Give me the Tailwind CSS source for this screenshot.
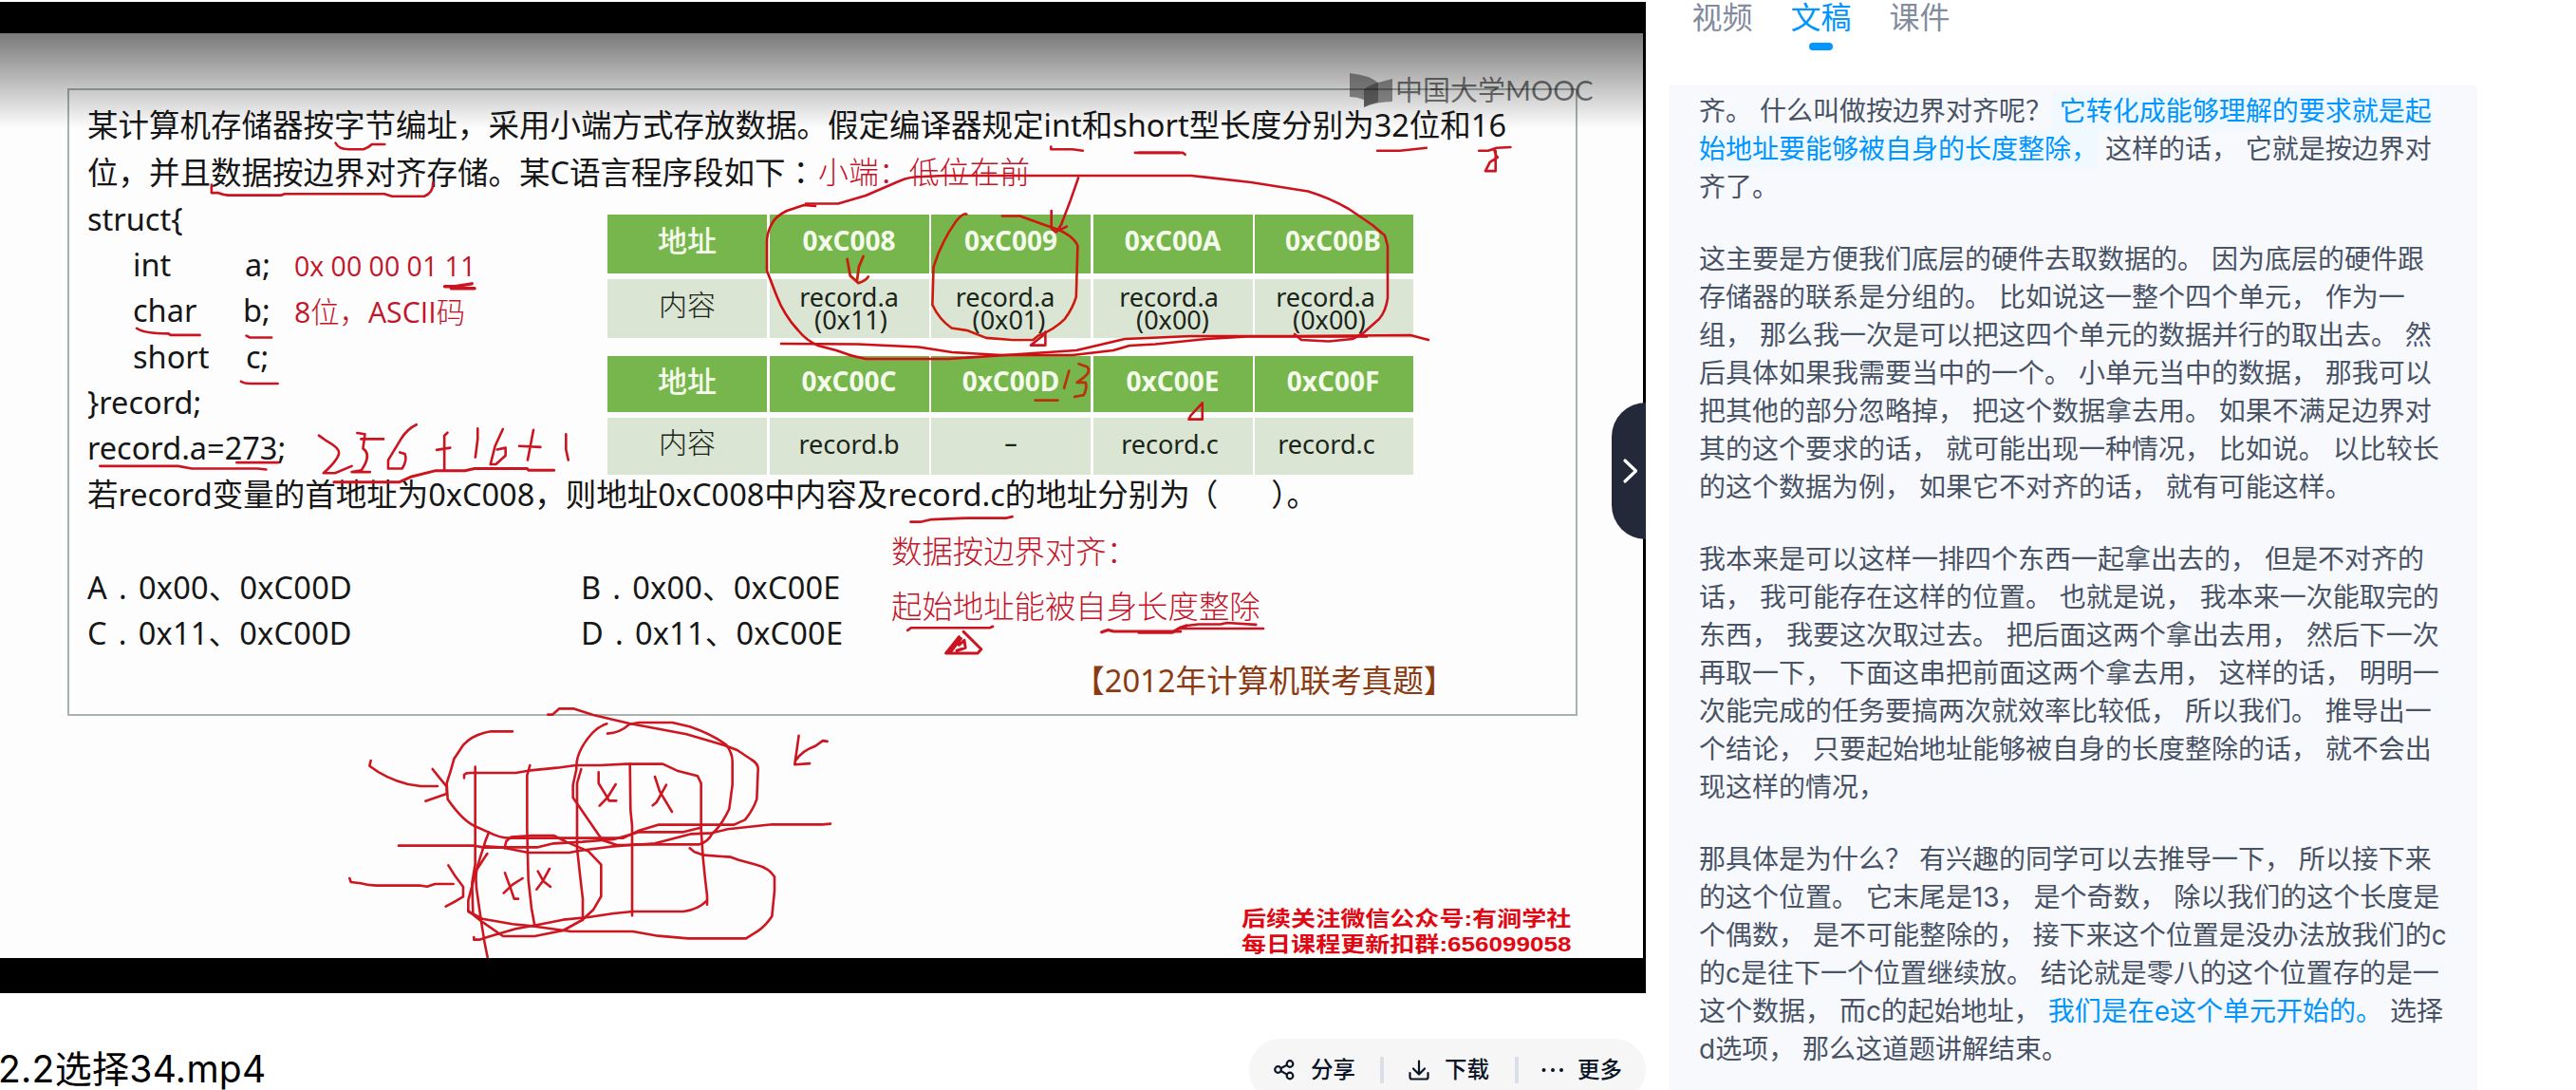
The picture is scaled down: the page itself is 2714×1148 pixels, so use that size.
<!DOCTYPE html>
<html lang="zh-CN">
<head>
<meta charset="utf-8">
<title>2.2选择34.mp4</title>
<script src="https://cdn.jsdelivr.net/npm/@tailwindcss/browser@4"></script>
</head>
<body class="bg-white">
<div class="flex h-[1148px] w-[2714px] overflow-hidden font-['Inter','Noto_Sans_CJK_SC',sans-serif]">

  <!-- Player column -->
  <main class="flex w-[1734px] shrink-0 flex-col pt-[2px]">
    <section class="relative h-[1044px] shrink-0 overflow-hidden bg-black pt-[33px]">
      <!-- Slide -->
      <div class="relative h-[974px] w-[1731px] bg-[#fdfdfd] px-[71px] pt-[58px]">
        <div class="h-[661px] w-[1591px] border-2 border-[#a9b1b1] pl-[19px] pt-[13px] font-['Noto_Sans','Noto_Sans_CJK_SC',sans-serif] text-[32.5px] leading-[48.35px] whitespace-nowrap text-[#161616]">
          <p>某计算机存储器按字节编址，采用小端方式存放数据。假定编译器规定int和short型长度分别为32位和16</p>
          <p>位，并且数据按边界对齐存储。某C语言程序段如下<span class="font-['Noto_Sans_CJK_TC']" lang="zh-TW">：</span></p>
          <p>struct{</p>
          <p class="flex pl-[48px]"><span class="w-[118px]">int</span><span>a;</span></p>
          <p class="flex pl-[48px]"><span class="w-[116px]">char</span><span>b;</span></p>
          <p class="flex pl-[48px]"><span class="w-[119px]">short</span><span>c;</span></p>
          <p>}record;</p>
          <p>record.a=273;</p>
          <p>若record变量的首地址为0xC008，则地址0xC008中内容及record.c的地址分别为<span class="-ml-[3px]">（</span><span class="inline-block w-[56px]"></span>）。</p>
          <div class="mt-[50px] grid grid-cols-[520px_1fr] tracking-[0.2px]">
            <p>A<span class="inline-block w-[33px] text-center">.</span>0x00、0xC00D</p>
            <p>B<span class="inline-block w-[33px] text-center">.</span>0x00、0xC00E</p>
            <p>C<span class="inline-block w-[33px] text-center">.</span>0x11、0xC00D</p>
            <p>D<span class="inline-block w-[33px] text-center">.</span>0x11、0xC00E</p>
          </div>
        </div>

        <!-- Memory tables -->
        <div class="absolute left-[640px] top-[191px] flex w-[849px] flex-col gap-[19px] font-['Noto_Sans','Noto_Sans_CJK_SC',sans-serif] text-[27px] leading-[24px] text-[#1a2418]">
          <div class="grid grid-cols-[168px_168px_168px_168px_1fr] grid-rows-[62px_62px] gap-x-[2.5px] gap-y-[6px] text-center *:flex *:flex-col *:items-center *:justify-center">
            <div class="bg-[#77b64c] pb-2 text-[31px] font-medium text-[#f4fbea]">地址</div>
            <div class="bg-[#77b64c] pb-2 text-[28px] font-bold text-[#f4fbea]">0xC008</div>
            <div class="bg-[#77b64c] pb-2 text-[28px] font-bold text-[#f4fbea]">0xC009</div>
            <div class="bg-[#77b64c] pb-2 text-[28px] font-bold text-[#f4fbea]">0xC00A</div>
            <div class="bg-[#77b64c] pb-2 pr-[2px] text-[28px] font-bold text-[#f4fbea]">0xC00B</div>
            <div class="bg-[#dae5d4] pb-2 text-[30px] font-light">内容</div>
            <div class="bg-[#dae5d4]"><span>record.a</span><span class="pl-1">(0x11)</span></div>
            <div class="bg-[#dae5d4] pr-[12px]"><span>record.a</span><span class="pl-2">(0x01)</span></div>
            <div class="bg-[#dae5d4] pr-[8px]"><span>record.a</span><span class="pl-2">(0x00)</span></div>
            <div class="bg-[#dae5d4] pr-[18px]"><span>record.a</span><span class="pl-2">(0x00)</span></div>
          </div>
          <div class="grid grid-cols-[168px_168px_168px_168px_1fr] grid-rows-[59px_60px] gap-x-[2.5px] gap-y-[6px] text-center *:flex *:flex-col *:items-center *:justify-center">
            <div class="bg-[#77b64c] pb-2 text-[31px] font-medium text-[#f4fbea]">地址</div>
            <div class="bg-[#77b64c] pb-2 text-[28px] font-bold text-[#f4fbea]">0xC00C</div>
            <div class="bg-[#77b64c] pb-2 text-[28px] font-bold text-[#f4fbea]">0xC00D</div>
            <div class="bg-[#77b64c] pb-2 text-[28px] font-bold text-[#f4fbea]">0xC00E</div>
            <div class="bg-[#77b64c] pb-2 pr-[2px] text-[28px] font-bold text-[#f4fbea]">0xC00F</div>
            <div class="bg-[#dae5d4] pb-2 text-[30px] font-light">内容</div>
            <div class="bg-[#dae5d4] pb-[5px]">record.b</div>
            <div class="bg-[#dae5d4] pb-2">–</div>
            <div class="bg-[#dae5d4] pr-[6px] pb-[5px]">record.c</div>
            <div class="bg-[#dae5d4] pr-[16px] pb-[5px]">record.c</div>
          </div>
        </div>

        <!-- Typed notes floating over the slide -->
        <div class="font-['Open_Sans','Noto_Sans_CJK_SC',sans-serif] font-light whitespace-nowrap text-[#c4142a]">
          <p class="absolute left-[310px] top-[225px] text-[28.500px] leading-[40px] font-normal">0x 00 00 01 11</p>
          <p class="absolute left-[310px] top-[274px] text-[30.300px] leading-[40px] font-normal">8<span class="font-light">位，</span>ASCII<span class="font-light">码</span></p>
          <p class="absolute left-[862px] top-[126px] text-[31.900px] leading-[40px]">小端：低位在前</p>
          <p class="absolute left-[939px] top-[525px] text-[32.400px] leading-[40px]">数据按边界对齐：</p>
          <p class="absolute left-[939px] top-[583px] text-[32.400px] leading-[40px]">起始地址能被自身长度整除</p>
        </div>
        <p class="absolute left-[1131px] top-[662px] font-['Noto_Sans','Noto_Sans_CJK_SC',sans-serif] text-[32.700px] leading-[40px] whitespace-nowrap text-[#8a3b12]">【2012年计算机联考真题】</p>
        <div class="absolute left-[1308px] top-[920px] origin-left scale-x-[1.184] font-['Liberation_Sans','Noto_Sans_CJK_SC',sans-serif] text-[22px] leading-[26.500px] font-bold whitespace-nowrap text-[#e00812]">
          <p>后续关注微信公众号:有涧学社</p>
          <p>每日课程更新扣群:656099058</p>
        </div>

        <!-- Top shade -->
        <div class="absolute left-0 top-0 h-[100px] w-full bg-linear-to-b from-black/52 to-transparent"></div>

        <!-- Watermark -->
        <div class="absolute left-[1422px] top-[42px] flex items-center gap-[3px] text-black/55">
          <svg class="h-[36px] w-[45px]" viewBox="0 0 45 36" fill="currentColor"><path d="M0 0Q20 2 30 10L45 6V30Q28 30 15 36V28Q8 25 0 25Z" opacity=".75"/><path d="M15 36V17Q20 13 30 10V30.500Q22 32 15 36Z" opacity=".6"/></svg>
          <span class="font-['Lato','Noto_Sans_CJK_SC',sans-serif] text-[29px] leading-[36px] whitespace-nowrap">中国大学MOOC</span>
        </div>

        <!-- Pen strokes -->
        <svg class="absolute left-0 top-0 h-[974px] w-[1731px] [&_path]:[vector-effect:non-scaling-stroke]" viewBox="0 35 1731 974" fill="none" stroke="#cb1420" stroke-width="2.600" stroke-linecap="round" stroke-linejoin="round">
          <g transform="matrix(.40816 0 0 .3699 0 0)">
            <path d="M866 407Q874 425 900 425H938Q952 420 960 411H993"/>
            <path d="M546 526V549H562Q580 556 590 556H725L735 552H992L1012 559H1095Q1118 550 1118 520"/>
            <path d="M353 935Q370 950 435 950L440 954H516M636 956L645 961H701M622 1086Q630 1092 645 1092H717"/>
            <path stroke-width="3.500" d="M1148 816H1175L1218 808M1165 821H1225"/>
            <path d="M258 1327H460L495 1334H665L687 1337M611 1317H718"/>
            <path d="M823 1240L845 1257Q875 1275 875 1290Q872 1310 835 1347H865L908 1327"/>
            <path d="M922 1233L942 1236L937 1277Q955 1290 943 1320L933 1339L908 1344H955M932 1250H990"/>
            <path d="M1075 1209Q1050 1222 1035 1250L1002 1310V1334H1038Q1052 1310 1045 1292L1032 1288"/>
            <path d="M1155 1232L1147 1240V1340M1127 1281L1162 1275M1233 1220V1250L1227 1302M1298 1222L1278 1270L1266 1322H1280L1305 1297V1275L1283 1280"/>
            <path d="M1377 1224L1362 1310M1340 1270L1395 1273M1461 1236V1280L1467 1310"/>
            <path stroke-width="3" d="M862 1373H1030L1060 1358L1125 1340H1200L1225 1334H1360L1365 1339H1430"/>
          </g>
          <g transform="matrix(.39541 0 0 .3699 600 0)">
            <path d="M1283 418V425H1340L1368 429M1507 435H1625"/>
            <path stroke="#c8200f" stroke-width="2.8" d="M740 738L748 785L770 806Q788 800 796 788M783 730L771 760L766 800"/>
            <path d="M1356 506L1335 570L1310 640L1298 660M1284 600V650L1295 660L1325 645"/>
            <path stroke="#cd1a0c" d="M1058 610Q1050 605 1030 630Q990 690 970 760L967 868Q985 910 1018 934L1060 941L1110 962L1180 968H1235L1250 955Q1290 940 1320 908Q1342 875 1350 845L1354 700Q1345 675 1305 655L1265 640L1200 615H1153"/>
            <path d="M1268 945V983H1229L1262 955"/>
            <path stroke="#b8340c" stroke-width="2.800" d="M1241 1140H1301M1331 1056L1318 1105M1357 1036L1380 1045Q1390 1058 1370 1075L1352 1089H1375Q1380 1105 1370 1125L1346 1130"/>
            <path d="M909 1486H935L965 1479L1060 1475H1165L1180 1471"/>
          </g>
          <g transform="matrix(.35714 0 0 .3699 1200 0)">
            <path d="M0 435H130L136 440M703 429H770L848 421M1003 429H1030L1055 421L1096 419M1048 424L1052 440L1058 448L1035 462L1022 487H1052V430"/>
            <path d="M187 1147V1194H147L152 1184Z"/>
          </g>
          <path stroke="#d00f14" d="M859 217L847 216L829 222Q816 228 812 238Q808 246 808 255V285L818 311Q826 332 841 348Q850 359 862 364L881 369Q896 375 912 378H999L1074 373L1134 369L1185 357L1209 356L1254 354H1361L1486 353L1505 358"/>
          <path d="M849 214.500H883L912 206L948 190.500Q958 186 972 186L995 185H1255L1318 192L1378 201.500Q1400 208 1421 220L1446 237L1459 248L1462 259V314Q1460 328 1453 336L1436 351L1425 357L1400 359.500L1371 358L1364 352"/>
          <path stroke="#d00f14" d="M823 362L904 362.500L968 365.500L1003 371L1055 374L1095 374L1130 374L1173 369L1190 364L1217 362.500L1271 357L1314 354.500H1440"/>
          <g transform="matrix(.39541 0 0 .375 600 560)">
            <path d="M901 277L910 270H1120L1128 266"/>
            <path stroke-width="3" d="M1038 295L1003 341H1088L1097 330L1050 281M1043 300L1015 338M1032 334L1055 326L1052 305L1038 318"/>
            <path stroke-width="3.200" d="M1418 282L1435 276L1450 280H1628"/>
            <path d="M611 573L604 625L600 654L640 651M603 642Q620 615 655 602L675 587L687 589"/>
          </g>
          <g transform="matrix(.35714 0 0 .375 1200 560)">
            <path stroke-width="3.200" d="M0 283H98L120 270L140 264"/><path d="M140 264L175 260H240L260 256L345 261M118 272H367"/>
          </g>
          <!-- Alignment sketch -->
          <g stroke="#ce1620" transform="matrix(.33333 0 0 .33333 380 730)">
            <path d="M592 68H606L628 49H672L735 69L850 96L1030 130L1150 165L1190 180L1235 210Q1256 222 1256 240L1252 335Q1240 370 1215 400L1180 416H940L880 434L830 458H470Q440 458 405 440L360 420Q320 400 275 335L272 285Q285 245 295 208L325 163Q355 130 412 121H480"/>
            <path d="M778 97Q735 110 700 170Q680 205 682 240L671 290V330L685 350L750 445L765 465L810 480H860L930 475L1045 445L1110 442L1160 430L1300 415H1460L1485 413"/>
            <path d="M780 128Q820 126 850 98L880 93H985L1040 106Q1110 130 1155 163Q1175 190 1175 215V290L1165 365Q1140 420 1110 445Q1098 470 1070 478H870L790 485L690 498L660 504H530L450 488H390L360 482H120"/>
            <path d="M327 268V258Q332 252 345 252H490L530 245L620 236L680 228H755L840 224H955L1000 245L1065 262L1076 285V430L1082 520L1088 580L1095 640V668"/>
            <path d="M362 233V540L352 600L355 695M535 228L526 260V430L530 590L540 680L550 735M697 240L684 285V490L695 590L702 650V717M851 224L853 370L858 420V703"/>
            <path d="M32 213L28 230Q80 270 150 288L190 294H243M227 240L255 275L272 295V318L205 341"/>
            <path d="M-35 585L-31 597L0 601Q25 608 50 608H190L210 611L235 603H293M277 544L300 580L324 612V643Q300 658 269 674"/>
            <path d="M752 250V285L775 322L785 340H808M806 288L780 330L755 356M930 264L945 310L984 375M966 290L935 345L923 355M456 568L475 620L485 650H498M512 585L480 605L452 632M560 563L578 595L600 612M597 555L575 595L556 620"/>
            <path d="M1040 490L1055 502L1085 512L1170 518L1195 527L1250 542Q1290 552 1308 580V625L1300 705Q1280 735 1255 752L1218 775H1035L940 767L860 753H665L550 737L480 730L385 713L340 690V655L365 560L400 507"/>
            <path d="M405 440L395 465L368 550Q360 590 370 645L380 715L392 790L401 835M455 490L460 468L475 455L540 450H610L650 470L720 500L760 542V642L735 685L700 717L640 750L550 768H450L380 720L340 688"/>
            <path d="M358 771V779H375L420 765L490 745L560 732L640 716L720 708L800 696L860 690H1020Q1065 685 1095 655"/>
            <path d="M395 484L440 487H560L610 475L700 470L800 462L860 445L880 439H1020L1075 425"/>
          </g>
        </svg>
      </div>

      <!-- Collapse handle -->
      <button class="absolute right-0 top-[422px] flex h-[144px] w-[36px] items-center justify-center rounded-l-[36px] bg-[#232938] pl-[3px]" aria-label="收起">
        <svg class="h-[28px] w-[18px]" viewBox="0 0 18 28" fill="none" stroke="#fff" stroke-width="3.200" stroke-linecap="round" stroke-linejoin="round"><path d="M3 3L14.500 14L3 25"/></svg>
      </button>
    </section>

    <!-- File title and actions -->
    <div class="flex justify-between">
      <h1 class="-ml-[2px] pt-[56px] text-[39px] leading-[48px] tracking-[0.300px] whitespace-nowrap text-black">2.2选择34.mp4</h1>
      <div class="mt-[48px] flex h-[66px] w-[418px] items-center rounded-full bg-[#f6f6f7] pl-[26px] text-[23.500px] font-medium text-[#0b1426]">
        <svg class="h-[22px] w-[22px]" viewBox="0 0 22 22" fill="none" stroke="currentColor" stroke-width="2.200"><circle cx="4.500" cy="10.500" r="3.300"/><circle cx="17" cy="4.500" r="3.300"/><circle cx="17" cy="17" r="3.300"/><path d="M7.500 9L14 5.800M7.500 12L14 15.600"/></svg>
        <span class="ml-[17px] w-[73px]">分享</span>
        <span class="h-[28px] w-[4px] bg-[#dbdfe8]"></span>
        <svg class="ml-[26px] h-[22px] w-[22px]" viewBox="0 0 22 22" fill="none" stroke="currentColor" stroke-width="2.200" stroke-linecap="round" stroke-linejoin="round"><path d="M11 1.500V15M5 9.500L11 15.500L17 9.500M1.500 14V18.500Q1.500 20.500 3.500 20.500H18.500Q20.500 20.500 20.500 18.500V14"/></svg>
        <span class="ml-[16px] w-[74px]">下载</span>
        <span class="h-[28px] w-[4px] bg-[#dbdfe8]"></span>
        <svg class="ml-[24px] h-[6px] w-[24px]" viewBox="0 0 24 6" fill="currentColor"><circle cx="2.500" cy="3" r="2"/><circle cx="12" cy="3" r="2"/><circle cx="21" cy="3" r="2"/></svg>
        <span class="ml-[14px]">更多</span>
      </div>
    </div>
  </main>

  <!-- Transcript column -->
  <aside class="ml-[24px] w-[852px] shrink-0">
    <nav class="flex h-[90px] gap-[40px] pl-[24.500px] text-[32px] leading-[38px] text-[#838c9e]">
      <span>视频</span>
      <span class="flex flex-col items-center gap-[7px] text-[#0095ff]">文稿<i class="h-[8px] w-[25px] rounded-full bg-[#0095ff]"></i></span>
      <span>课件</span>
    </nav>
    <article class="flex h-[1058px] flex-col gap-[36px] bg-[#f8f9fd] pl-[32px] pt-[6.500px] text-[28px] leading-[40px] whitespace-nowrap text-[#485366]">
      <p>齐。 什么叫做按边界对齐呢？<span class="bg-[#f0f9ff] py-[3px] text-[#0095ff]"> 它转化成能够理解的要求就是起<br>始地址要能够被自身的长度整除，</span> 这样的话， 它就是按边界对<br>齐了。</p>
      <p>这主要是方便我们底层的硬件去取数据的。 因为底层的硬件跟<br>存储器的联系是分组的。 比如说这一整个四个单元， 作为一<br>组， 那么我一次是可以把这四个单元的数据并行的取出去。 然<br>后具体如果我需要当中的一个。 小单元当中的数据， 那我可以<br>把其他的部分忽略掉， 把这个数据拿去用。 如果不满足边界对<br>其的这个要求的话， 就可能出现一种情况， 比如说。 以比较长<br>的这个数据为例， 如果它不对齐的话， 就有可能这样。</p>
      <p>我本来是可以这样一排四个东西一起拿出去的， 但是不对齐的<br>话， 我可能存在这样的位置。 也就是说， 我本来一次能取完的<br>东西， 我要这次取过去。 把后面这两个拿出去用， 然后下一次<br>再取一下， 下面这串把前面这两个拿去用， 这样的话， 明明一<br>次能完成的任务要搞两次就效率比较低， 所以我们。 推导出一<br>个结论， 只要起始地址能够被自身的长度整除的话， 就不会出<br>现这样的情况，</p>
      <p>那具体是为什么？ 有兴趣的同学可以去推导一下， 所以接下来<br>的这个位置。 它末尾是13， 是个奇数， 除以我们的这个长度是<br>个偶数， 是不可能整除的， 接下来这个位置是没办法放我们的c<br>的c是往下一个位置继续放。 结论就是零八的这个位置存的是一<br>这个数据， 而c的起始地址， <span class="text-[#0095ff]">我们是在e这个单元开始的。</span> 选择<br>d选项， 那么这道题讲解结束。</p>
    </article>
  </aside>
</div>
</body>
</html>
